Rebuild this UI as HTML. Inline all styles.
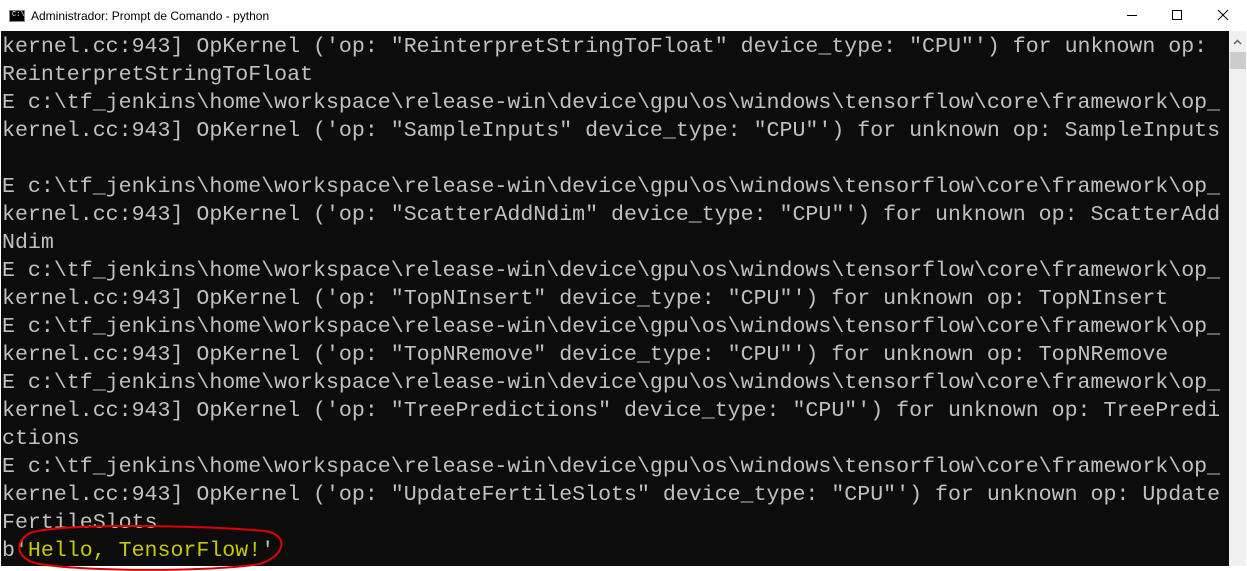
<!DOCTYPE html>
<html><head><meta charset="utf-8"><style>
html,body{margin:0;padding:0;width:1247px;height:571px;overflow:hidden;background:#fff;}
.title{position:absolute;left:0;top:0;width:1247px;height:31px;background:#fff;font-family:"Liberation Sans",sans-serif;font-size:12px;color:#000;}
.title .t{position:absolute;left:31px;top:9px;}
.icon{position:absolute;left:9px;top:10px;width:14px;height:10px;background:#000;border:1px solid #888;}
.icon span{position:absolute;left:2px;top:0px;color:#fff;font-size:7px;font-family:"Liberation Mono",monospace;}
.con{position:absolute;left:1px;top:31px;width:1228px;height:535px;background:#0c0c0c;overflow:hidden;}
pre{margin:0;font-family:"Liberation Mono",monospace;font-size:21.6px;line-height:28px;color:#c0c0c0;padding-left:1px;padding-top:2px;}
.y{color:#c8c800;}
.sb{position:absolute;left:1229px;top:31px;width:17px;height:535px;background:#f0f0f0;}
.thumb{position:absolute;left:1230px;top:52px;width:16px;height:17px;background:#cdcdcd;}
.bl{position:absolute;left:1246px;top:0;width:1px;height:571px;background:#1883d7;}
</style></head><body>
<div class="title"><div class="icon"><span>C:\</span></div><div class="t">Administrador: Prompt de Comando - python</div>
<svg style="position:absolute;left:1100px;top:0" width="147" height="31"><line x1="27" y1="15.5" x2="37" y2="15.5" stroke="#000"/><rect x="72.5" y="10.5" width="9" height="9" fill="none" stroke="#000"/><path d="M118 10 L128 20 M128 10 L118 20" stroke="#000"/></svg></div>
<div class="con"><pre>kernel.cc:943] OpKernel ('op: "ReinterpretStringToFloat" device_type: "CPU"') for unknown op:
ReinterpretStringToFloat
E c:\tf_jenkins\home\workspace\release-win\device\gpu\os\windows\tensorflow\core\framework\op_
kernel.cc:943] OpKernel ('op: "SampleInputs" device_type: "CPU"') for unknown op: SampleInputs

E c:\tf_jenkins\home\workspace\release-win\device\gpu\os\windows\tensorflow\core\framework\op_
kernel.cc:943] OpKernel ('op: "ScatterAddNdim" device_type: "CPU"') for unknown op: ScatterAdd
Ndim
E c:\tf_jenkins\home\workspace\release-win\device\gpu\os\windows\tensorflow\core\framework\op_
kernel.cc:943] OpKernel ('op: "TopNInsert" device_type: "CPU"') for unknown op: TopNInsert
E c:\tf_jenkins\home\workspace\release-win\device\gpu\os\windows\tensorflow\core\framework\op_
kernel.cc:943] OpKernel ('op: "TopNRemove" device_type: "CPU"') for unknown op: TopNRemove
E c:\tf_jenkins\home\workspace\release-win\device\gpu\os\windows\tensorflow\core\framework\op_
kernel.cc:943] OpKernel ('op: "TreePredictions" device_type: "CPU"') for unknown op: TreePredi
ctions
E c:\tf_jenkins\home\workspace\release-win\device\gpu\os\windows\tensorflow\core\framework\op_
kernel.cc:943] OpKernel ('op: "UpdateFertileSlots" device_type: "CPU"') for unknown op: Update
FertileSlots
b'<span class="y">Hello, TensorFlow!</span>'</pre></div>
<div class="sb"><svg width="17" height="20"><path d="M5 13 L8.5 9.5 L12 13" stroke="#606060" stroke-width="1.5" fill="none"/></svg></div>
<div class="thumb"></div>
<svg style="position:absolute;left:0;top:0" width="1247" height="571"><path d="M30 533 C60 523 200 525 265 531 C290 535 285 556 260 564 C200 573 70 571 35 563 C15 557 15 541 30 533 Z" fill="none" stroke="#e00000" stroke-width="2"/></svg>
</body></html>
